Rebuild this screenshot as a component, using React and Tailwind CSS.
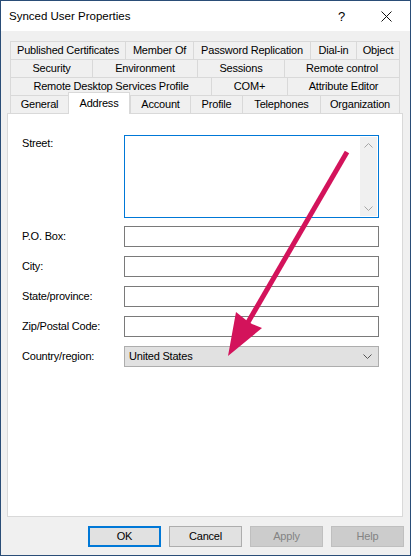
import React from 'react';

// tab rows, top to bottom; widths taken from the dialog
const tabRows = [
  [
    { label: 'Published Certificates', w: 'w-[115px]' },
    { label: 'Member Of', w: 'w-[68px]' },
    { label: 'Password Replication', w: 'w-[117px]' },
    { label: 'Dial-in', w: 'w-[46px]' },
    { label: 'Object', w: 'w-[44px]' },
  ],
  [
    { label: 'Security', w: 'w-[82px]' },
    { label: 'Environment', w: 'w-[105px]' },
    { label: 'Sessions', w: 'w-[87px]' },
    { label: 'Remote control', w: 'w-[116px]' },
  ],
  [
    { label: 'Remote Desktop Services Profile', w: 'w-[201px]' },
    { label: 'COM+', w: 'w-[76px]' },
    { label: 'Attribute Editor', w: 'w-[113px]' },
  ],
];

const bottomTabs = [
  { label: 'General', w: 'w-[58px]' },
  { label: 'Address', w: 'w-[62px]', active: true },
  { label: 'Account', w: 'w-[60px]' },
  { label: 'Profile', w: 'w-[52px]' },
  { label: 'Telephones', w: 'w-[78px]' },
  { label: 'Organization', w: 'w-[80px]' },
];

const fields = ['P.O. Box:', 'City:', 'State/province:', 'Zip/Postal Code:'];

const Chevron = ({ up, color = '#a6a6a6' }) => (
  <svg width="9" height="5" viewBox="0 0 9 5">
    <polyline
      points={up ? '0.5,4.5 4.5,0.5 8.5,4.5' : '0.5,0.5 4.5,4.5 8.5,0.5'}
      fill="none"
      stroke={color}
      strokeWidth="1"
    />
  </svg>
);

const Tab = ({ label, w, last }) => (
  <div
    className={`${w} h-full flex items-center justify-center border-t border-l border-[#d9d9d9] bg-[#f0f0f0] ${
      last ? 'border-r' : ''
    }`}
  >
    {label}
  </div>
);

export default function App() {
  return (
    <div className="relative w-[411px] h-[556px] border border-[#2a4d77] bg-[#f0f0f0] flex flex-col font-['Liberation_Sans',Arial,sans-serif] text-[11px] tracking-[-0.2px] text-black leading-[13px] overflow-hidden">
      {/* Title bar */}
      <div className="h-[30px] shrink-0 bg-white flex items-center pl-[8px] pr-[18px]">
        <span className="flex-1 text-[11.5px] tracking-normal">Synced User Properties</span>
        <span className="text-[13px] mr-[36px]">?</span>
        <svg width="11" height="11" viewBox="0 0 11 11">
          <path d="M0.5 0.5 L10.5 10.5 M10.5 0.5 L0.5 10.5" stroke="#111" strokeWidth="1" />
        </svg>
      </div>

      {/* Tabs */}
      <div className="mt-[10px] ml-[9px] mr-[10px] flex flex-col">
        {tabRows.map((row, i) => (
          <div key={i} className="flex h-[18px]">
            {row.map((t, j) => (
              <Tab key={t.label} {...t} last={j === row.length - 1} />
            ))}
          </div>
        ))}
        <div className="flex items-end h-[18px]">
          {bottomTabs.map((t, j) =>
            t.active ? (
              <div
                key={t.label}
                className={`${t.w} relative z-10 h-[22px] -mb-px flex items-center justify-center bg-white border-t border-l border-r border-[#d9d9d9]`}
              >
                {t.label}
              </div>
            ) : (
              <Tab key={t.label} {...t} last={j === bottomTabs.length - 1} />
            )
          )}
        </div>
      </div>

      {/* Panel */}
      <div className="h-[404px] shrink-0 ml-[6px] mr-[7px] bg-white border border-[#d9d9d9] pl-[14px] pt-[21px]">
        <div className="flex">
          <div className="w-[102px] pt-[2px]">Street:</div>
          <div className="w-[255px] h-[83px] border border-[#0078d7] bg-white flex justify-end p-px">
            <div className="w-[17px] bg-[#f0f0f0] flex flex-col items-center justify-between pt-[6px] pb-[5px]">
              <Chevron up />
              <Chevron />
            </div>
          </div>
        </div>

        {fields.map((f, i) => (
          <div key={f} className={`flex items-center ${i === 0 ? 'mt-[8px]' : 'mt-[9px]'}`}>
            <div className="w-[102px]">{f}</div>
            <div className="w-[255px] h-[21px] border border-[#7a7a7a] bg-white" />
          </div>
        ))}

        <div className="flex items-center mt-[9px]">
          <div className="w-[102px]">Country/region:</div>
          <div className="w-[255px] h-[21px] border border-[#adadad] bg-[#e1e1e1] flex items-center justify-between pl-[4px] pr-[6px]">
            <span>United States</span>
            <Chevron color="#555" />
          </div>
        </div>
      </div>

      {/* Buttons */}
      <div className="mt-[9px] flex justify-end gap-[8px] pr-[6px]">
        <button className="w-[73px] h-[21px] border-2 border-[#0078d7] bg-[#e1e1e1]">OK</button>
        <button className="w-[73px] h-[21px] border border-[#adadad] bg-[#e1e1e1]">Cancel</button>
        <button className="w-[73px] h-[21px] border border-[#bfbfbf] bg-[#cccccc] text-[#838383]">Apply</button>
        <button className="w-[73px] h-[21px] border border-[#bfbfbf] bg-[#cccccc] text-[#838383]">Help</button>
      </div>

      {/* Annotation arrow drawn over the dialog */}
      <svg
        className="absolute top-[-1px] left-[-1px] pointer-events-none"
        width="411"
        height="556"
        viewBox="0 0 411 556"
      >
        <line x1="347" y1="152" x2="247" y2="324" stroke="#d3135b" strokeWidth="5" />
        <polygon points="228,356 236,312 246,320 252,324 262,328" fill="#d3135b" />
      </svg>
    </div>
  );
}
